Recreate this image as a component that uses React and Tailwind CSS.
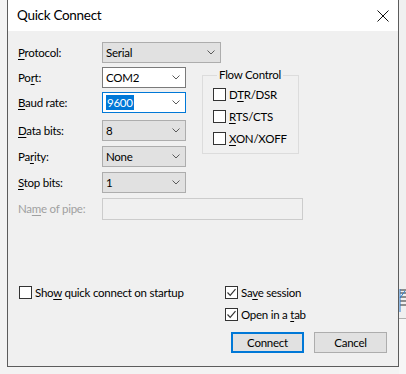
import React from 'react';

// Windows-style "Quick Connect" dialog
const Chevron = () => (
  <svg width="8" height="5" viewBox="0 0 8 5" className="shrink-0">
    <path d="M0.5 0.5 L4 4 L7.5 0.5" fill="none" stroke="#5a5a5a" strokeWidth="1" />
  </svg>
);

const U = ({ children }) => <span className="underline underline-offset-[2px] decoration-1">{children}</span>;

const Combo = ({ children, width, variant = 'grey' }) => {
  const styles = {
    grey: 'bg-[#e1e1e1] border-[#adadad]',
    edit: 'bg-white border-[#7a7a7a]',
    focus: 'bg-white border-[#0078d7]',
  };
  return (
    <div className={`h-[21px] ${width} border ${styles[variant]} flex items-center justify-between pl-[3px] pr-[5px]`}>
      <span className="leading-none">{children}</span>
      <Chevron />
    </div>
  );
};

const Row = ({ label, children, className = '', disabled }) => (
  <div className={`flex items-center ${className}`}>
    <div className={`w-[84px] shrink-0 ${disabled ? 'text-[#a0a0a0]' : ''}`}>{label}</div>
    {children}
  </div>
);

const Check = ({ checked }) => (
  <div className="w-[13px] h-[13px] border border-[#333] bg-white shrink-0 flex items-center justify-center">
    {checked && (
      <svg width="11" height="11" viewBox="0 0 11 11">
        <path d="M1.5 5.5 L4.2 8.3 L9.5 2.2" fill="none" stroke="#333" strokeWidth="1.2" />
      </svg>
    )}
  </div>
);

const CheckRow = ({ checked, children, className = '' }) => (
  <div className={`flex items-center h-[13px] gap-[3px] ${className}`}>
    <Check checked={checked} />
    <span className="whitespace-nowrap">{children}</span>
  </div>
);

export default function App() {
  return (
    <div className="w-[406px] h-[374px] bg-[#f3f3f3] flex font-['Lato',sans-serif] text-[11.5px] tracking-[-0.25px] text-black overflow-hidden">
      <div className="w-[7px] shrink-0" />

      <div className="w-[392px] h-[367px] shrink-0 border-x border-b border-[#5c5c5c] flex flex-col">
        {/* title bar */}
        <div className="h-[31px] bg-white flex items-center justify-between pl-[9px] pr-[9px]">
          <span className="text-[13.5px] tracking-[-0.3px]">Quick Connect</span>
          <svg width="12" height="12" viewBox="0 0 12 12">
            <path d="M0.5 0.5 L11.5 11.5 M11.5 0.5 L0.5 11.5" stroke="#111" strokeWidth="1" />
          </svg>
        </div>

        {/* body */}
        <div className="flex-1 bg-[#f0f0f0] flex flex-col pl-[10px]">
          <Row label={<><U>P</U>rotocol:</>} className="mt-[11px]">
            <Combo width="w-[119px]">Serial</Combo>
          </Row>

          <div className="flex mt-[4px]">
            <div className="flex flex-col">
              <Row label={<>Po<U>r</U>t:</>}>
                <Combo width="w-[84px]" variant="edit">COM2</Combo>
              </Row>
              <Row label={<><U>B</U>aud rate:</>} className="mt-[4px]">
                <Combo width="w-[84px]" variant="focus">
                  <span className="bg-[#0078d7] text-white px-[1px] py-[1px]">9600</span>
                </Combo>
              </Row>
              <Row label={<><U>D</U>ata bits:</>} className="mt-[7px]">
                <Combo width="w-[84px]">8</Combo>
              </Row>
              <Row label={<>Pa<U>r</U>ity:</>} className="mt-[5px]">
                <Combo width="w-[84px]">None</Combo>
              </Row>
              <Row label={<><U>S</U>top bits:</>} className="mt-[5px]">
                <Combo width="w-[84px]">1</Combo>
              </Row>
            </div>

            <fieldset className="ml-[16px] w-[97px] h-[87px] border border-[#dcdcdc] pl-[10px]">
              <legend className="ml-[4px] px-[2px] leading-[16px]">Flow Control</legend>
              <div className="flex flex-col gap-[9px] mt-[5px]">
                <CheckRow>D<U>T</U>R/DSR</CheckRow>
                <CheckRow><U>R</U>TS/CTS</CheckRow>
                <CheckRow><U>X</U>ON/XOFF</CheckRow>
              </div>
            </fieldset>
          </div>

          <Row label={<>Na<U>m</U>e of pipe:</>} className="mt-[5px]" disabled>
            <div className="w-[201px] h-[22px] border border-[#cccccc] bg-[#f0f0f0]" />
          </Row>

          <div className="flex mt-[66px]">
            <div className="w-[207px] pl-[1px]">
              <CheckRow>Sho<U>w</U> quick connect on startup</CheckRow>
            </div>
            <div className="flex flex-col gap-[9px]">
              <CheckRow checked>Sa<U>v</U>e session</CheckRow>
              <CheckRow checked>Open in a <U>t</U>ab</CheckRow>
            </div>
          </div>

          <div className="flex justify-end gap-[10px] pr-[11px] mt-[11px]">
            <button className="w-[73px] h-[21px] border-2 border-[#0078d7] bg-[#e1e1e1] leading-none">Connect</button>
            <button className="w-[73px] h-[21px] border border-[#adadad] bg-[#e1e1e1] leading-none">Cancel</button>
          </div>
        </div>
      </div>

      {/* sliver of the window behind */}
      <div className="w-[7px] shrink-0 flex flex-col">
        <div className="h-[288px] bg-[#f0f0f0]" />
        <div className="h-[30px] bg-[#f0f0f0] flex items-start">
          <svg width="7" height="26" viewBox="0 0 7 26">
            <path d="M1 2 L7 2 M1 5 L7 5 M1 9 L7 9 M1 13 L7 13 M1 17 L7 17" stroke="#2a2a2a" strokeWidth="1" />
            <path d="M1 10 L6 3" stroke="#2f7fd0" strokeWidth="1" />
            <path d="M1 1 L1 24" stroke="#2f7fd0" strokeWidth="1" />
          </svg>
        </div>
        <div className="flex-1 border-t border-[#b0b0b0] bg-[#f6f6f6]" />
      </div>
    </div>
  );
}
